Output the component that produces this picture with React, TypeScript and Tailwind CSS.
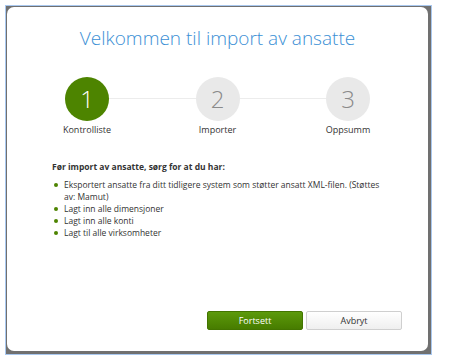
import React from "react";

const steps = [
  { n: 1, label: "Kontrolliste", active: true },
  { n: 2, label: "Importer", active: false },
  { n: 3, label: "Oppsumm", active: false },
];

const items = [
  "Eksportert ansatte fra ditt tidligere system som støtter ansatt XML-filen. (Støttes av: Mamut)",
  "Lagt inn alle dimensjoner",
  "Lagt inn alle konti",
  "Lagt til alle virksomheter",
];

export default function App() {
  return (
    <div
      className="w-[462px] h-[364px] bg-white pl-[5px] pt-[5px]"
      style={{ fontFamily: '"Open Sans", "Liberation Sans", sans-serif' }}
    >
      <div className="w-[427px] h-[350px] border border-[#a9c8ef] bg-[#707070] pl-[1px] pt-[1px] pr-[3px] pb-[3px]">
        <div className="h-full bg-white rounded-[7px] flex flex-col">
          <h1 className="text-center text-[19px] font-light text-[#3b8fd5] mt-[18px] leading-[26px]">
            Velkommen til import av ansatte
          </h1>

          {/* steps */}
          <div className="relative mt-[26px] flex justify-between px-[42px]">
            <div className="absolute left-[80px] right-[80px] top-[21px] h-px bg-[#ececec]" />
            {steps.map((s) => (
              <div key={s.n} className="relative flex flex-col items-center w-[76px]">
                <div
                  className={
                    s.active
                      ? "w-[44px] h-[44px] rounded-full bg-[#4d8400] text-white flex items-center justify-center text-[24px] font-light"
                      : "w-[44px] h-[44px] rounded-full bg-[#e9e9e9] text-[#8a8a8a] flex items-center justify-center text-[24px] font-light"
                  }
                >
                  {s.n}
                </div>
                <div className="mt-[3px] text-[9px] text-[#333] leading-[12px]">{s.label}</div>
              </div>
            ))}
          </div>

          {/* checklist */}
          <div className="mt-[25px] pl-[45px] pr-[44px] text-[8.5px] text-[#333] leading-[12px]">
            <p className="font-bold">Før import av ansatte, sørg for at du har:</p>
            <ul className="mt-[6px]">
              {items.map((t) => (
                <li key={t} className="flex">
                  <span className="w-[4px] h-[4px] rounded-full bg-[#4d8400] mt-[4px] ml-[2px] mr-[6px] shrink-0" />
                  <span>{t}</span>
                </li>
              ))}
            </ul>
          </div>

          <div className="mt-auto mb-[21px] flex justify-end gap-[3px] pr-[26px]">
            <button className="w-[96px] h-[19px] rounded-[2px] bg-gradient-to-b from-[#5c9a0c] to-[#477c00] border border-[#437500] text-white text-[9px]">
              Fortsett
            </button>
            <button className="w-[96px] h-[19px] rounded-[2px] bg-gradient-to-b from-white to-[#efefef] border border-[#cfcfcf] text-[#333] text-[9px]">
              Avbryt
            </button>
          </div>
        </div>
      </div>
    </div>
  );
}
